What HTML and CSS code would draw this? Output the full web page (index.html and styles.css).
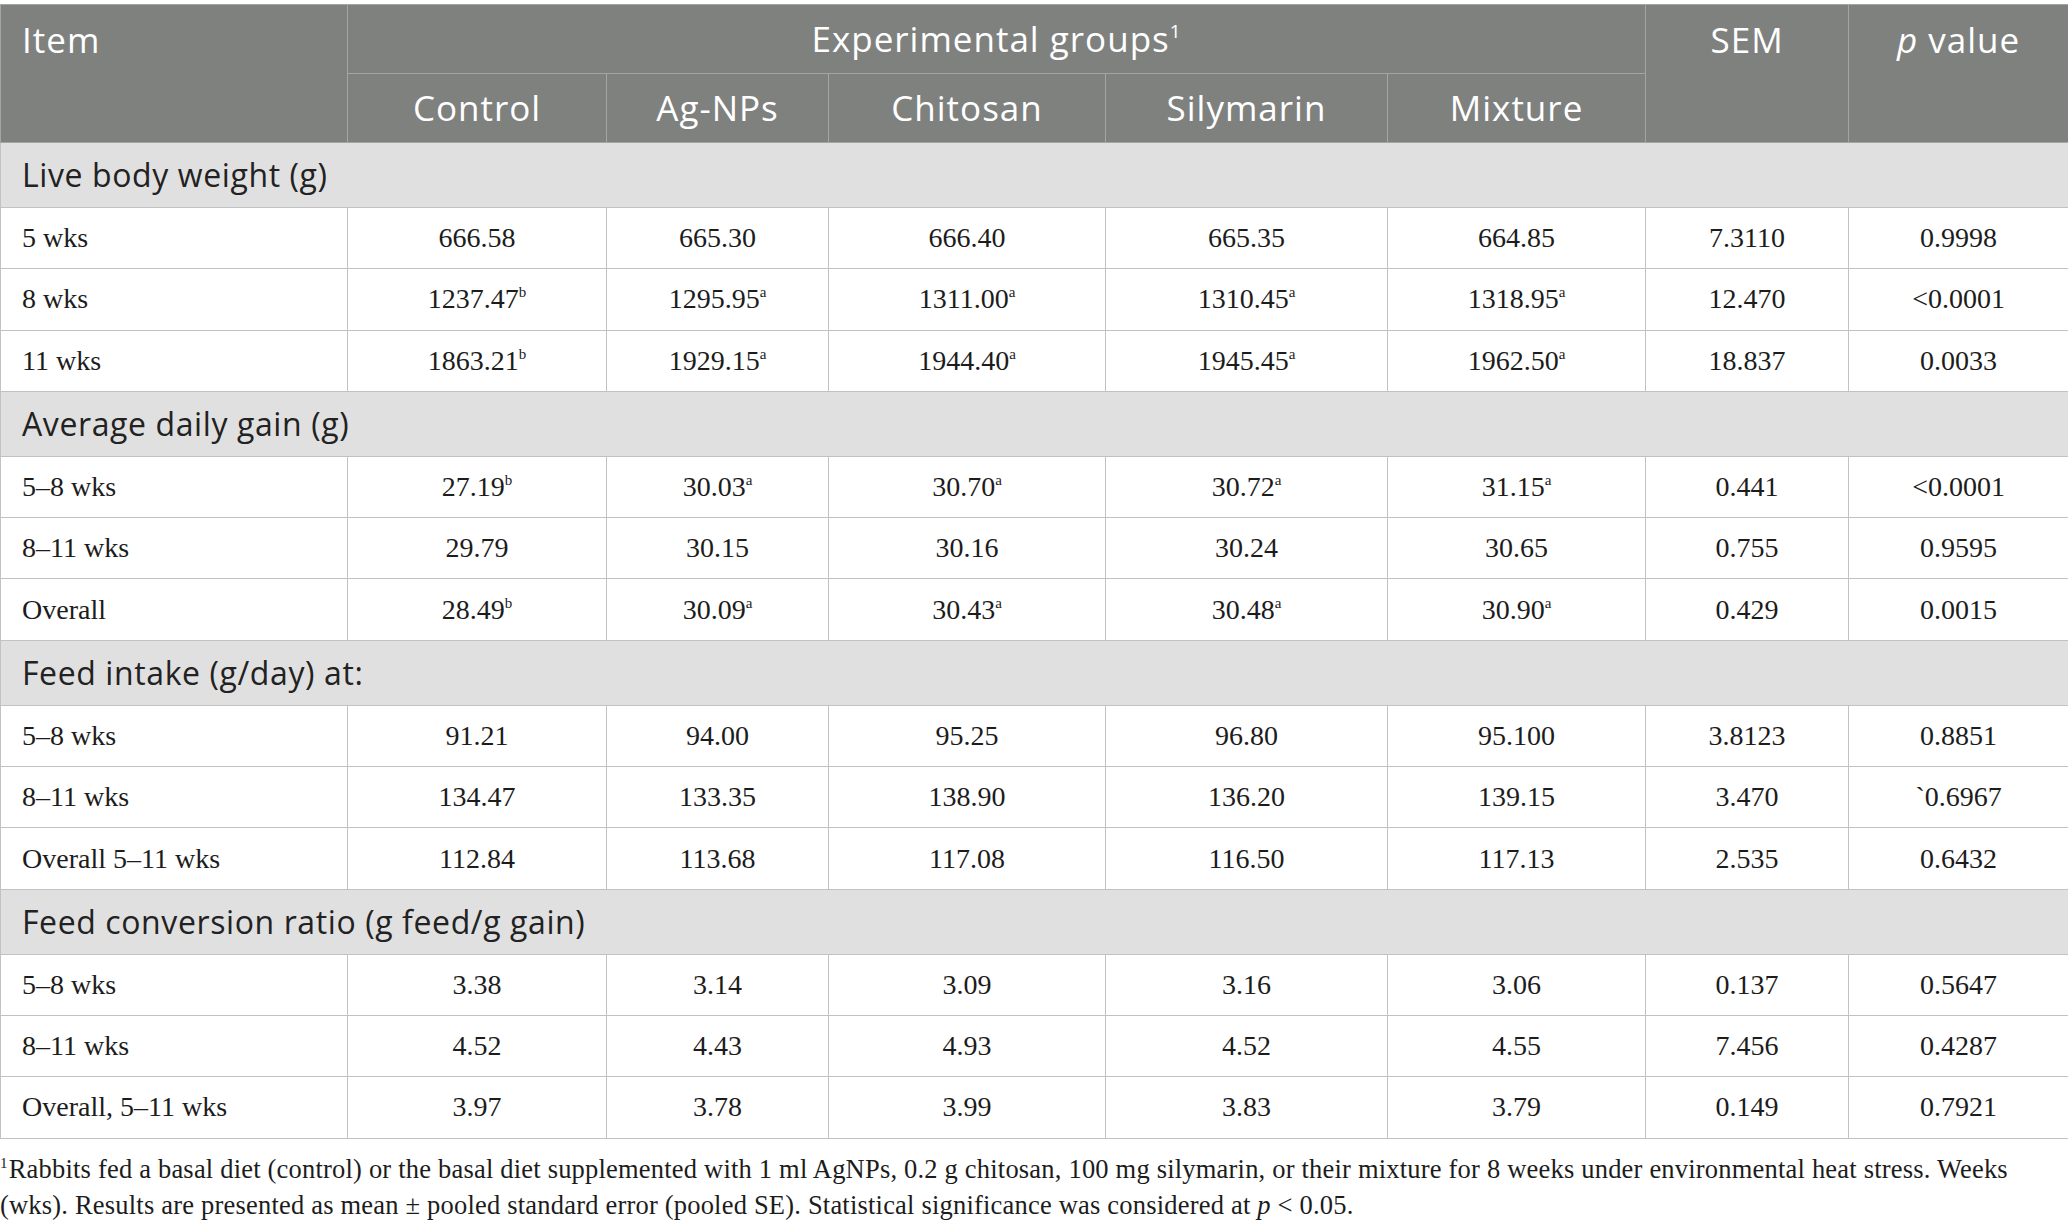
FILE: index.html
```html
<!DOCTYPE html>
<html>
<head>
<meta charset="utf-8">
<link rel="stylesheet" href="styles.css">
</head>
<body>
<div class="page">
<table class="tbl">
<colgroup>
<col class="c-item"><col class="c-ctrl"><col class="c-ag"><col class="c-chi"><col class="c-sil"><col class="c-mix"><col class="c-sem"><col class="c-p">
</colgroup>
<thead>
<tr class="h-top">
<th rowspan="2" class="h-item">Item</th>
<th colspan="5" class="h-group">Experimental groups<sup>1</sup></th>
<th rowspan="2" class="h-side">SEM</th>
<th rowspan="2" class="h-side"><i>p</i> value</th>
</tr>
<tr class="h-sub">
<th>Control</th><th>Ag-NPs</th><th>Chitosan</th><th>Silymarin</th><th>Mixture</th>
</tr>
</thead>
<tbody>
<tr class="sec"><td colspan="8">Live body weight (g)</td></tr>
<tr class="row"><td class="lbl">5 wks</td><td>666.58</td><td>665.30</td><td>666.40</td><td>665.35</td><td>664.85</td><td>7.3110</td><td>0.9998</td></tr>
<tr class="row"><td class="lbl">8 wks</td><td>1237.47<sup>b</sup></td><td>1295.95<sup>a</sup></td><td>1311.00<sup>a</sup></td><td>1310.45<sup>a</sup></td><td>1318.95<sup>a</sup></td><td>12.470</td><td>&lt;0.0001</td></tr>
<tr class="row"><td class="lbl">11 wks</td><td>1863.21<sup>b</sup></td><td>1929.15<sup>a</sup></td><td>1944.40<sup>a</sup></td><td>1945.45<sup>a</sup></td><td>1962.50<sup>a</sup></td><td>18.837</td><td>0.0033</td></tr>
<tr class="sec"><td colspan="8">Average daily gain (g)</td></tr>
<tr class="row"><td class="lbl">5–8 wks</td><td>27.19<sup>b</sup></td><td>30.03<sup>a</sup></td><td>30.70<sup>a</sup></td><td>30.72<sup>a</sup></td><td>31.15<sup>a</sup></td><td>0.441</td><td>&lt;0.0001</td></tr>
<tr class="row"><td class="lbl">8–11 wks</td><td>29.79</td><td>30.15</td><td>30.16</td><td>30.24</td><td>30.65</td><td>0.755</td><td>0.9595</td></tr>
<tr class="row"><td class="lbl">Overall</td><td>28.49<sup>b</sup></td><td>30.09<sup>a</sup></td><td>30.43<sup>a</sup></td><td>30.48<sup>a</sup></td><td>30.90<sup>a</sup></td><td>0.429</td><td>0.0015</td></tr>
<tr class="sec"><td colspan="8">Feed intake (g/day) at:</td></tr>
<tr class="row"><td class="lbl">5–8 wks</td><td>91.21</td><td>94.00</td><td>95.25</td><td>96.80</td><td>95.100</td><td>3.8123</td><td>0.8851</td></tr>
<tr class="row"><td class="lbl">8–11 wks</td><td>134.47</td><td>133.35</td><td>138.90</td><td>136.20</td><td>139.15</td><td>3.470</td><td>`0.6967</td></tr>
<tr class="row"><td class="lbl">Overall 5–11 wks</td><td>112.84</td><td>113.68</td><td>117.08</td><td>116.50</td><td>117.13</td><td>2.535</td><td>0.6432</td></tr>
<tr class="sec"><td colspan="8">Feed conversion ratio (g feed/g gain)</td></tr>
<tr class="row"><td class="lbl">5–8 wks</td><td>3.38</td><td>3.14</td><td>3.09</td><td>3.16</td><td>3.06</td><td>0.137</td><td>0.5647</td></tr>
<tr class="row"><td class="lbl">8–11 wks</td><td>4.52</td><td>4.43</td><td>4.93</td><td>4.52</td><td>4.55</td><td>7.456</td><td>0.4287</td></tr>
<tr class="row"><td class="lbl">Overall, 5–11 wks</td><td>3.97</td><td>3.78</td><td>3.99</td><td>3.83</td><td>3.79</td><td>0.149</td><td>0.7921</td></tr>
</tbody>
</table>
<p class="note"><sup>1</sup>Rabbits fed a basal diet (control) or the basal diet supplemented with 1 ml AgNPs, 0.2 g chitosan, 100 mg silymarin, or their mixture for 8 weeks under environmental heat stress. Weeks (wks). Results are presented as mean ± pooled standard error (pooled SE). Statistical significance was considered at <i>p</i>&nbsp;&lt; 0.05.</p>
</div>
</body>
</html>
```

FILE: styles.css
```css
html, body {
  margin: 0;
  padding: 0;
  background: #ffffff;
}

.page {
  width: 2068px;
  padding-top: 4px;
}

.tbl {
  width: 2068px;
  border-collapse: collapse;
  table-layout: fixed;
}

.c-item { width: 347px; }
.c-ctrl { width: 259px; }
.c-ag { width: 222px; }
.c-chi { width: 277px; }
.c-sil { width: 282px; }
.c-mix { width: 258px; }
.c-sem { width: 203px; }
.c-p { width: 220px; }

.tbl th {
  background: #7f817f;
  color: #ffffff;
  font-family: "Open Sans", "Noto Sans", sans-serif;
  font-weight: 400;
  font-size: 35px;
  letter-spacing: 1px;
  line-height: 44px;
  border: 1px solid #a3a5a4;
  padding: 0;
  text-align: center;
}

.h-top th {
  height: 68px;
}

.h-sub th {
  height: 68px;
  vertical-align: middle;
}

.tbl .h-item {
  text-align: left;
  vertical-align: top;
  padding: 13px 0 0 21px;
}

.tbl .h-side {
  vertical-align: top;
  padding-top: 13px;
}

.tbl .h-group {
  vertical-align: middle;
}

.tbl th sup {
  font-size: 19px;
  vertical-align: 14px;
  line-height: 0;
}

.tbl td {
  border: 1px solid #c2c2c2;
  padding: 0;
  text-align: center;
  vertical-align: middle;
  font-family: "Liberation Serif", "Times New Roman", serif;
  font-size: 28px;
  line-height: 34px;
  color: #1c1c1c;
}

.tbl td.lbl {
  text-align: left;
  padding-left: 21px;
}

.tbl td sup {
  font-size: 15px;
  vertical-align: 11px;
  line-height: 0;
}

.sec td {
  background: #e1e0e1;
  height: 64px;
  text-align: left;
  padding-left: 21px;
  font-family: "Open Sans", "Noto Sans", sans-serif;
  font-size: 32px;
  letter-spacing: 0.6px;
  color: #222222;
}

.row td {
  height: 60.3px;
}

.note {
  margin: 12px 0 0 0;
  max-width: 2040px;
  font-family: "Liberation Serif", "Times New Roman", serif;
  font-size: 26.5px;
  letter-spacing: 0.2px;
  line-height: 36px;
  color: #1c1c1c;
}

.note sup {
  font-size: 15px;
  vertical-align: 10px;
  line-height: 0;
  margin-right: 1px;
}
```
